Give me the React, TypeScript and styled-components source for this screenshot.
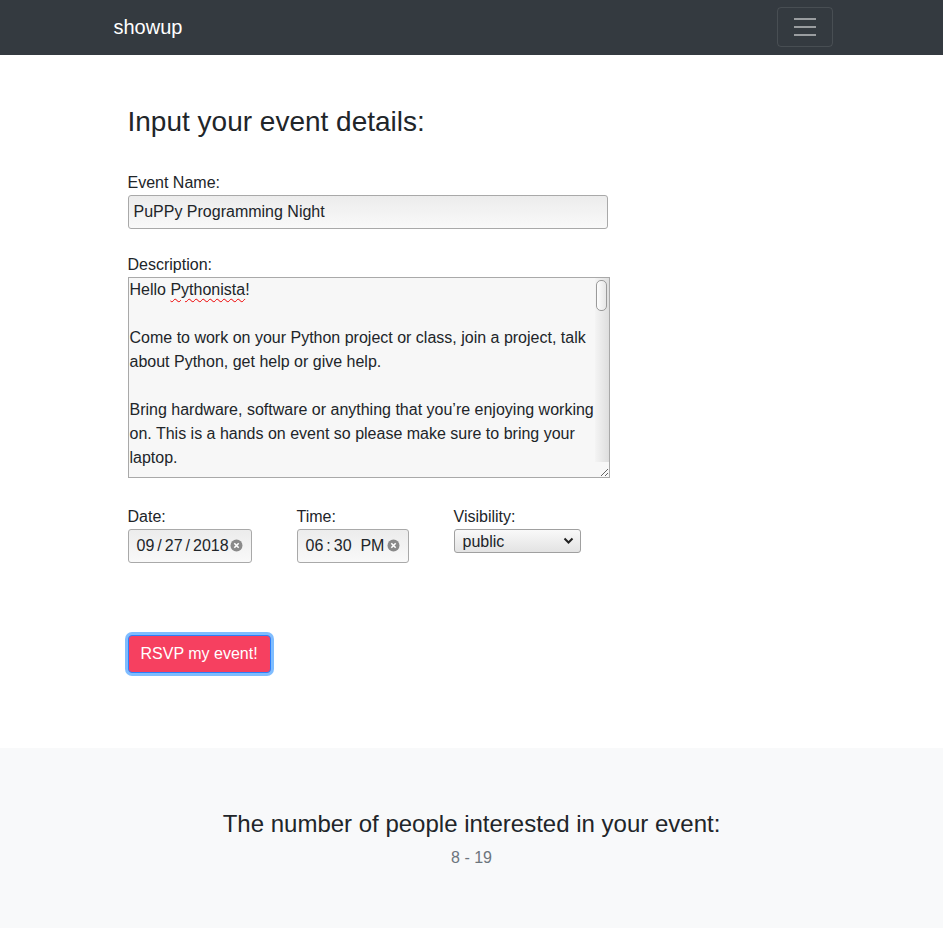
import React from "react";
import styled, { createGlobalStyle } from "styled-components";

const GlobalStyle = createGlobalStyle`
  html, body {
    margin: 0;
    padding: 0;
  }
  body {
    font-family: "Liberation Sans", Arial, sans-serif;
    font-size: 16px;
    line-height: 1.5;
    color: #212529;
    background: #fff;
  }
  * {
    box-sizing: border-box;
  }
`;

const Navbar = styled.nav`
  background: #343a40;
  height: 55px;
  padding: 7px 0 8px;
`;

const NavInner = styled.div`
  width: 720px;
  margin: 0 auto;
  display: flex;
  align-items: center;
  justify-content: space-between;
`;

const Brand = styled.a`
  color: #fff;
  font-size: 20px;
  line-height: 30px;
  padding-left: 2px;
  text-decoration: none;
`;

const Toggler = styled.button`
  width: 56px;
  height: 40px;
  margin-right: -1px;
  background: transparent;
  border: 1px solid rgba(255, 255, 255, 0.1);
  border-radius: 4px;
  display: flex;
  align-items: center;
  justify-content: center;
  padding: 0;
`;

const Container = styled.main`
  width: 720px;
  margin: 0 auto;
  padding: 50px 16px 75px;
`;

const Heading = styled.h3`
  font-size: 28px;
  font-weight: 400;
  line-height: 1.2;
  margin: 0 0 32px;
`;

const Field = styled.div<{ $gap?: number }>`
  display: flex;
  flex-direction: column;
  align-items: flex-start;
  margin-bottom: ${p => p.$gap ?? 24}px;
`;

const Label = styled.label`
  display: block;
  line-height: 24px;
`;

const TextInput = styled.input`
  width: 480px;
  height: 34px;
  padding: 0 5px;
  font: inherit;
  font-size: 16px;
  color: #212529;
  border: 1px solid #a9a9a9;
  border-radius: 3px;
  background: linear-gradient(#ececec, #f9f9f9);
  outline: none;
`;

const TextArea = styled.div`
  position: relative;
  width: 482px;
  height: 201px;
  display: flex;
  border: 1px solid #a9a9a9;
  background: #f7f7f7;
  overflow: hidden;
  resize: both;
`;

const TextContent = styled.div`
  flex: 1;
  min-width: 0;
  padding: 0 0 0 1px;
  white-space: pre-wrap;
  line-height: 24px;
  overflow: hidden;
`;

const ScrollTrack = styled.div`
  flex: none;
  width: 14px;
  margin-bottom: 15px;
  padding: 2px 2px 0 1px;
  background: linear-gradient(90deg, #f4f4f4, #dedede);
`;

const ScrollThumb = styled.div`
  height: 31px;
  border: 1px solid #9a9a9a;
  border-radius: 5px;
  background: linear-gradient(90deg, #fdfdfd, #e6e6e6);
`;

const Misspelled = styled.span`
  text-decoration: underline wavy #e00;
  text-decoration-thickness: 1px;
  text-underline-offset: 3px;
`;

const InlineRow = styled.div`
  display: flex;
  gap: 45px;
  margin-bottom: 72px;
`;

const InlineField = styled.div`
  display: flex;
  flex-direction: column;
`;

const FakeInput = styled.div<{ $width: number }>`
  width: ${p => p.$width}px;
  height: 34px;
  display: flex;
  align-items: center;
  padding: 0 8px;
  border: 1px solid #a9a9a9;
  border-radius: 3px;
  background: linear-gradient(#ececec, #f9f9f9);
  white-space: pre;
`;

const Sep = styled.span`
  margin: 0 3px;
`;

const Clear = styled.svg`
  margin-left: auto;
  flex: none;
`;

const SelectWrap = styled.div`
  position: relative;
  width: 127px;
`;

const Select = styled.select`
  width: 127px;
  height: 24px;
  appearance: none;
  padding: 0 0 0 8px;
  font: inherit;
  font-size: 16px;
  color: #212529;
  border: 1px solid #a0a0a0;
  border-radius: 3px;
  background: linear-gradient(#f9f9f9, #e3e3e3);
  outline: none;
`;

const Chevron = styled.svg`
  position: absolute;
  right: 7px;
  top: 8px;
  pointer-events: none;
`;

const SubmitButton = styled.button`
  font: inherit;
  font-size: 16px;
  line-height: 24px;
  color: #fff;
  background: #f64060;
  border: 1px solid #2d7ff9;
  border-radius: 4px;
  padding: 6px 12px;
  box-shadow: 0 0 0 3px rgba(0, 123, 255, 0.5);
`;

const Footer = styled.section`
  background: #f8f9fa;
  border-bottom: 1px solid #dee2e6;
  text-align: center;
  padding: 61px 0 58px;
`;

const FooterTitle = styled.h4`
  font-size: 24px;
  font-weight: 400;
  line-height: 29px;
  margin: 0 0 8px;
`;

const Muted = styled.p`
  color: #6c757d;
  margin: 0;
`;

const ClearIcon = () => (
  <Clear width="13" height="13" viewBox="0 0 13 13">
    <circle cx="6.5" cy="6.5" r="6" fill="#8a8a8a" />
    <path d="M4.3 4.3l4.4 4.4M8.7 4.3l-4.4 4.4" stroke="#fff" strokeWidth="1.6" />
  </Clear>
);

const descriptionRest =
  "!\n\nCome to work on your Python project or class, join a project, talk about Python, get help or give help.\n\nBring hardware, software or anything that you’re enjoying working on. This is a hands on event so please make sure to bring your laptop.\n\nWe’ll have snacks and drinks, and plenty of friendly Pythonistas to help you out.\n\nSee you there!";

export default function App() {
  return (
    <>
      <GlobalStyle />
      <Navbar>
        <NavInner>
          <Brand href="#">showup</Brand>
          <Toggler aria-label="Toggle navigation">
            <svg width="30" height="30" viewBox="0 0 30 30">
              <path
                d="M4 7h22M4 15h22M4 23h22"
                stroke="rgba(255,255,255,0.5)"
                strokeWidth="2"
              />
            </svg>
          </Toggler>
        </NavInner>
      </Navbar>

      <Container>
        <Heading>Input your event details:</Heading>

        <Field>
          <Label>Event Name:</Label>
          <TextInput defaultValue="PuPPy Programming Night" />
        </Field>

        <Field $gap={27}>
          <Label>Description:</Label>
          <TextArea>
            <TextContent>
              Hello <Misspelled>Pythonista</Misspelled>
              {descriptionRest}
            </TextContent>
            <ScrollTrack>
              <ScrollThumb />
            </ScrollTrack>
          </TextArea>
        </Field>

        <InlineRow>
          <InlineField>
            <Label>Date:</Label>
            <FakeInput $width={124}>
              09<Sep>/</Sep>27<Sep>/</Sep>2018
              <ClearIcon />
            </FakeInput>
          </InlineField>
          <InlineField>
            <Label>Time:</Label>
            <FakeInput $width={112}>
              06<Sep>:</Sep>30{"  "}PM
              <ClearIcon />
            </FakeInput>
          </InlineField>
          <InlineField>
            <Label>Visibility:</Label>
            <SelectWrap>
              <Select defaultValue="public">
                <option value="public">public</option>
                <option value="private">private</option>
              </Select>
              <Chevron width="11" height="8" viewBox="0 0 11 8">
                <path d="M1.5 1.5l4 4 4-4" fill="none" stroke="#222" strokeWidth="2" />
              </Chevron>
            </SelectWrap>
          </InlineField>
        </InlineRow>

        <SubmitButton>RSVP my event!</SubmitButton>
      </Container>

      <Footer>
        <FooterTitle>The number of people interested in your event:</FooterTitle>
        <Muted>8 - 19</Muted>
      </Footer>
    </>
  );
}
